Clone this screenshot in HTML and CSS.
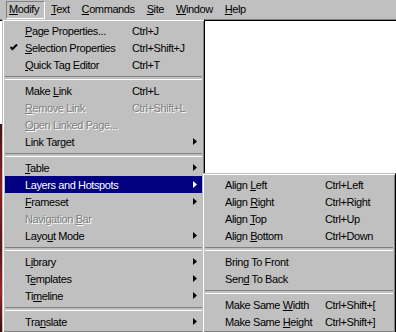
FILE: index.html
```html
<!DOCTYPE html>
<html>
<head lang="en">
    <meta charset="utf-8">
    <meta name="viewport" content="width=device-width, initial-scale=1">
    <title>Modify menu</title>

    <link rel="stylesheet" href="styles.css">
</head>
<body>
<header class="menubar">
    <span class="menubar-item active"><u>M</u>odify</span>
    <span class="menubar-item"><u>T</u>ext</span>
    <span class="menubar-item"><u>C</u>ommands</span>
    <span class="menubar-item"><u>S</u>ite</span>
    <span class="menubar-item"><u>W</u>indow</span>
    <span class="menubar-item"><u>H</u>elp</span>
</header>
<main class="document">
    <div class="photo"></div>
</main>

<ul class="menu main-menu">
    <li class="item"><span class="label"><u>P</u>age Properties...</span><span class="key">Ctrl+J</span></li>
    <li class="item">
        <span class="check"><svg width="8" height="7" viewBox="0 0 8 7"><path d="M0.5 3 L2.5 5 L7 0.5" fill="none" stroke="#000" stroke-width="2"/></svg></span>
        <span class="label"><u>S</u>election Properties</span><span class="key">Ctrl+Shift+J</span>
    </li>
    <li class="item"><span class="label"><u>Q</u>uick Tag Editor</span><span class="key">Ctrl+T</span></li>
    <li class="separator"></li>
    <li class="item"><span class="label">Make <u>L</u>ink</span><span class="key">Ctrl+L</span></li>
    <li class="item disabled"><span class="label"><u>R</u>emove Link</span><span class="key">Ctrl+Shift+L</span></li>
    <li class="item disabled"><span class="label"><u>O</u>pen Linked Page...</span></li>
    <li class="item"><span class="label">Link Target</span><span class="key"></span><span class="arrow"></span></li>
    <li class="separator"></li>
    <li class="item"><span class="label"><u>T</u>able</span><span class="key"></span><span class="arrow"></span></li>
    <li class="item selected"><span class="label">Layers and Hotspots</span><span class="key"></span><span class="arrow"></span></li>
    <li class="item"><span class="label"><u>F</u>rameset</span><span class="key"></span><span class="arrow"></span></li>
    <li class="item disabled"><span class="label">Navigation <u>B</u>ar</span></li>
    <li class="item"><span class="label">Layo<u>u</u>t Mode</span><span class="key"></span><span class="arrow"></span></li>
    <li class="separator"></li>
    <li class="item"><span class="label">L<u>i</u>brary</span><span class="key"></span><span class="arrow"></span></li>
    <li class="item"><span class="label">T<u>e</u>mplates</span><span class="key"></span><span class="arrow"></span></li>
    <li class="item"><span class="label">Ti<u>m</u>eline</span><span class="key"></span><span class="arrow"></span></li>
    <li class="separator"></li>
    <li class="item"><span class="label">Tra<u>n</u>slate</span><span class="key"></span><span class="arrow"></span></li>
</ul>

<ul class="menu sub-menu">
    <li class="item"><span class="label">Align <u>L</u>eft</span><span class="key">Ctrl+Left</span></li>
    <li class="item"><span class="label">Align <u>R</u>ight</span><span class="key">Ctrl+Right</span></li>
    <li class="item"><span class="label">Align <u>T</u>op</span><span class="key">Ctrl+Up</span></li>
    <li class="item"><span class="label">Align <u>B</u>ottom</span><span class="key">Ctrl+Down</span></li>
    <li class="separator"></li>
    <li class="item"><span class="label">Brin<u>g</u> To Front</span></li>
    <li class="item"><span class="label">Sen<u>d</u> To Back</span></li>
    <li class="separator"></li>
    <li class="item"><span class="label">Make Same <u>W</u>idth</span><span class="key">Ctrl+Shift+[</span></li>
    <li class="item"><span class="label">Make Same <u>H</u>eight</span><span class="key">Ctrl+Shift+]</span></li>
</ul>
</body>
</html>
```

FILE: styles.css
```css
* {
    box-sizing: border-box;
}

body {
    position: relative;
    margin: 0;
    width: 396px;
    height: 332px;
    overflow: hidden;
    background-color: #c0c0c0;
    color: #000;
    font: 11px "Liberation Sans", Arial, sans-serif;
    letter-spacing: -0.4px;
}

u {
    text-underline-offset: 1px;
}

.menubar {
    display: flex;
    height: 19px;
    padding: 1px 0 0 6px;
}

.menubar-item {
    padding: 2px 5px 3px 2px;
    border: 1px solid transparent;
    line-height: 11px;
    margin-right: 3px;
}

.menubar-item.active {
    border-color: #808080 #fff #fff #808080;
}

.document {
    height: 313px;
    background-color: #fff;
    border-top: 1px solid #808080;
    box-shadow: inset 0 1px #000;
}

.photo {
    width: 2px;
    height: 208px;
    margin-top: 104px;
    background: linear-gradient(#4a1212, #8c2424 30%, #5a1818 60%, #962a2a 80%, #3c0e0e);
}

.menu {
    position: absolute;
    margin: 0;
    padding: 2px;
    list-style: none;
    background-color: #c0c0c0;
    border: 1px solid;
    border-color: #c0c0c0 #000 #000 #c0c0c0;
    box-shadow: inset 1px 1px #fff, inset -1px -1px #808080;
}

.main-menu {
    left: 2px;
    top: 19px;
    width: 203px;
}

.sub-menu {
    left: 202px;
    top: 173px;
    width: 194px;
}

.item {
    display: flex;
    align-items: center;
    height: 17px;
    padding: 0 5px 0 20px;
    white-space: nowrap;
}

.main-menu .label {
    width: 107px;
}

.sub-menu .label {
    width: 100px;
}

.key {
    flex: 1;
}

.check {
    display: flex;
    width: 20px;
    margin-left: -20px;
    padding-left: 5px;
}

.arrow {
    width: 4px;
    height: 7px;
    background-color: currentColor;
    clip-path: polygon(0 0, 100% 50%, 0 100%);
}

.item.selected {
    background-color: #000080;
    color: #fff;
}

.item.disabled {
    color: #808080;
    text-shadow: 1px 1px #fff;
}

.separator {
    height: 9px;
    padding-top: 3px;
}

.separator::before {
    content: "";
    display: block;
    height: 2px;
    border-top: 1px solid #808080;
    border-bottom: 1px solid #fff;
}
```
